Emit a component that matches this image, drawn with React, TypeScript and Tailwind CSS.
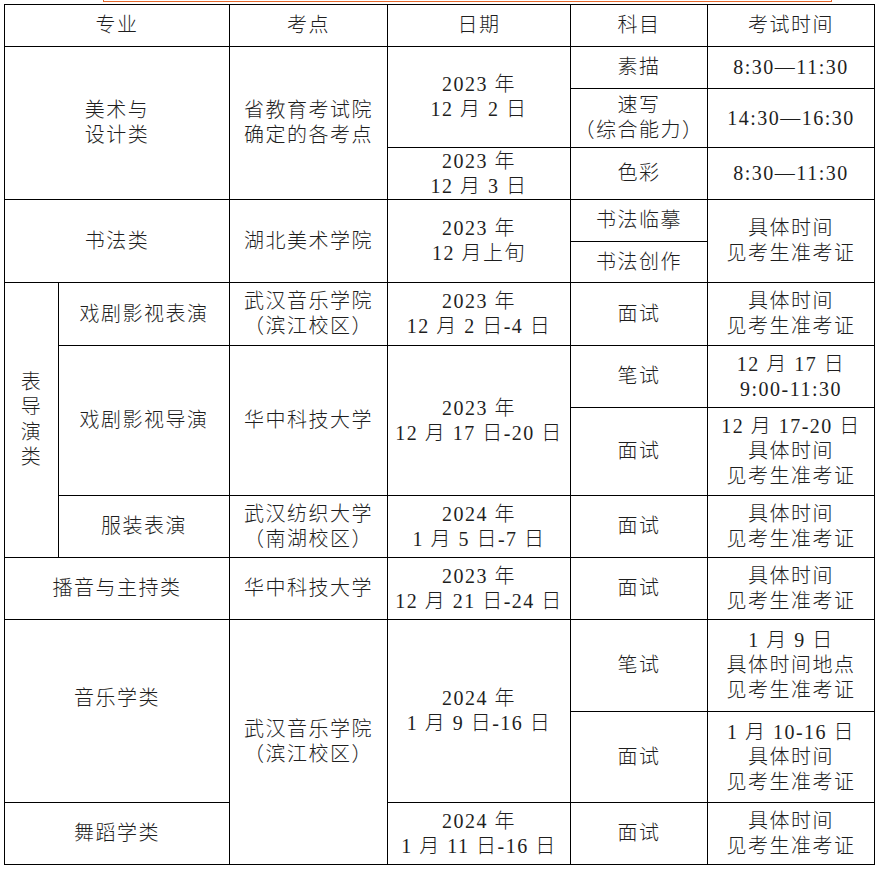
const cell = "border border-black p-0 text-center align-middle";

export default function App() {
  return (
    <div className="min-h-screen bg-white font-['Liberation_Serif','Noto_Sans_CJK_SC',serif] text-[#1e1e1e]">
      {/* selection box edge at the top */}
      <div className="ml-[103px] h-[2px] w-[729px] border-x border-b border-[#e3672c]" />

      <table className="ml-[4px] mt-[2px] w-[870px] table-fixed border-collapse text-[20px] font-light leading-[25px] tracking-[1.5px]">
        <colgroup>
          <col className="w-[54px]" />
          <col className="w-[171px]" />
          <col className="w-[158px]" />
          <col className="w-[183px]" />
          <col className="w-[137px]" />
          <col className="w-[167px]" />
        </colgroup>
        <tbody>
          <tr className="h-[42px]">
            <td colSpan={2} className={cell}>专业</td>
            <td className={cell}>考点</td>
            <td className={cell}>日期</td>
            <td className={cell}>科目</td>
            <td className={cell}>考试时间</td>
          </tr>

          {/* 美术与设计类 */}
          <tr className="h-[42px]">
            <td colSpan={2} rowSpan={3} className={cell}>
              美术与<br />设计类
            </td>
            <td rowSpan={3} className={cell}>
              省教育考试院<br />确定的各考点
            </td>
            <td rowSpan={2} className={cell}>
              2023 年<br />12 月 2 日
            </td>
            <td className={cell}>素描</td>
            <td className={cell}>8:30—11:30</td>
          </tr>
          <tr className="h-[59px]">
            <td className={cell}>
              速写<br />（综合能力）
            </td>
            <td className={cell}>14:30—16:30</td>
          </tr>
          <tr className="h-[52px]">
            <td className={cell}>
              2023 年<br />12 月 3 日
            </td>
            <td className={cell}>色彩</td>
            <td className={cell}>8:30—11:30</td>
          </tr>

          {/* 书法类 */}
          <tr className="h-[42px]">
            <td colSpan={2} rowSpan={2} className={cell}>书法类</td>
            <td rowSpan={2} className={cell}>湖北美术学院</td>
            <td rowSpan={2} className={cell}>
              2023 年<br />12 月上旬
            </td>
            <td className={cell}>书法临摹</td>
            <td rowSpan={2} className={cell}>
              具体时间<br />见考生准考证
            </td>
          </tr>
          <tr className="h-[41px]">
            <td className={cell}>书法创作</td>
          </tr>

          {/* 表导演类 */}
          <tr className="h-[63px]">
            <td rowSpan={4} className={cell}>
              表<br />导<br />演<br />类
            </td>
            <td className={cell}>戏剧影视表演</td>
            <td className={cell}>
              武汉音乐学院<br />（滨江校区）
            </td>
            <td className={cell}>
              2023 年<br />12 月 2 日-4 日
            </td>
            <td className={cell}>面试</td>
            <td className={cell}>
              具体时间<br />见考生准考证
            </td>
          </tr>
          <tr className="h-[62px]">
            <td rowSpan={2} className={cell}>戏剧影视导演</td>
            <td rowSpan={2} className={cell}>华中科技大学</td>
            <td rowSpan={2} className={cell}>
              2023 年<br />12 月 17 日-20 日
            </td>
            <td className={cell}>笔试</td>
            <td className={cell}>
              12 月 17 日<br />9:00-11:30
            </td>
          </tr>
          <tr className="h-[88px]">
            <td className={cell}>面试</td>
            <td className={cell}>
              12 月 17-20 日<br />具体时间<br />见考生准考证
            </td>
          </tr>
          <tr className="h-[62px]">
            <td className={cell}>服装表演</td>
            <td className={cell}>
              武汉纺织大学<br />（南湖校区）
            </td>
            <td className={cell}>
              2024 年<br />1 月 5 日-7 日
            </td>
            <td className={cell}>面试</td>
            <td className={cell}>
              具体时间<br />见考生准考证
            </td>
          </tr>

          {/* 播音与主持类 */}
          <tr className="h-[62px]">
            <td colSpan={2} className={cell}>播音与主持类</td>
            <td className={cell}>华中科技大学</td>
            <td className={cell}>
              2023 年<br />12 月 21 日-24 日
            </td>
            <td className={cell}>面试</td>
            <td className={cell}>
              具体时间<br />见考生准考证
            </td>
          </tr>

          {/* 音乐学类 / 舞蹈学类 */}
          <tr className="h-[92px]">
            <td colSpan={2} rowSpan={2} className={`${cell} pb-[25px]`}>
              音乐学类
            </td>
            <td rowSpan={3} className={cell}>
              武汉音乐学院<br />（滨江校区）
            </td>
            <td rowSpan={2} className={cell}>
              2024 年<br />1 月 9 日-16 日
            </td>
            <td className={cell}>笔试</td>
            <td className={cell}>
              1 月 9 日<br />具体时间地点<br />见考生准考证
            </td>
          </tr>
          <tr className="h-[91px]">
            <td className={cell}>面试</td>
            <td className={cell}>
              1 月 10-16 日<br />具体时间<br />见考生准考证
            </td>
          </tr>
          <tr className="h-[62px]">
            <td colSpan={2} className={cell}>舞蹈学类</td>
            <td className={cell}>
              2024 年<br />1 月 11 日-16 日
            </td>
            <td className={cell}>面试</td>
            <td className={cell}>
              具体时间<br />见考生准考证
            </td>
          </tr>
        </tbody>
      </table>
    </div>
  );
}
